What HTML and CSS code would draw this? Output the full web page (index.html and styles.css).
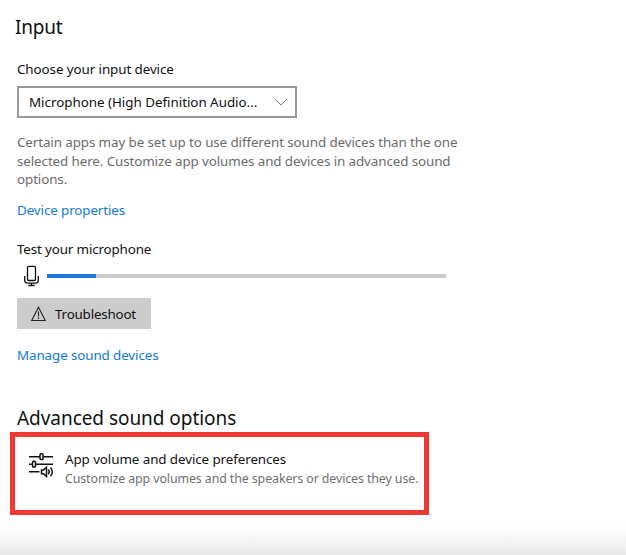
FILE: index.html
```html
<!DOCTYPE html>
<html lang="en">
<head>
<meta charset="utf-8">
<title>Sound settings</title>
<link rel="stylesheet" href="styles.css">
</head>
<body>
<main class="page">
  <h2 class="heading heading-input">Input</h2>
  <div class="label">Choose your input device</div>
  <div class="select">
    <span class="select-value">Microphone (High Definition Audio...</span>
    <svg width="14" height="8" viewBox="0 0 14 8"><path d="M1 1l6 6 6-6" fill="none" stroke="#777" stroke-width="1"/></svg>
  </div>
  <p class="hint">Certain apps may be set up to use different sound devices than the one<br>selected here. Customize app volumes and devices in advanced sound<br>options.</p>
  <a class="link">Device properties</a>
  <div class="label label-test">Test your microphone</div>
  <div class="meter">
    <svg width="16" height="22" viewBox="0 0 16 22" fill="none" stroke="#111" stroke-width="1.3"><rect x="4.5" y="1.3" width="8" height="14.2" rx="1.3"/><path d="M1.7 11v4.2q0 2.9 2.9 2.9h7.8q2.9 0 2.9-2.9V11M8.5 18v2.5M5.3 20.5h6.4"/></svg>
    <div class="track"><div class="level"></div></div>
  </div>
  <button class="button">
    <svg width="16" height="16" viewBox="0 0 16 16" fill="none" stroke="#222" stroke-width="1.1"><path d="M8.5 1.2L15.3 14.5H1.7ZM8.5 5.5v5M8.5 11.6v1.3"/></svg>
    <span>Troubleshoot</span>
  </button>
  <a class="link link-manage">Manage sound devices</a>
  <h2 class="heading heading-advanced">Advanced sound options</h2>
  <section class="card">
    <svg width="26" height="26" viewBox="0 0 26 26" fill="none" stroke="#111" stroke-width="1.5"><path d="M1 4.7h10.8M15.2 4.7H25M1 12.2h2.8M7.2 12.2H25M1 19.7h10.5"/><rect x="12" y="1.8" width="3" height="5.8" rx="1.2"/><rect x="4.5" y="9.3" width="3" height="5.8" rx="1.2"/><path d="M13.5 18h2l3-2.7v9.2l-3-2.7h-2z" stroke-width="1.5"/><path d="M20.3 17.5q1.7 2.3 0 4.7M22.5 15.5q3.6 4.4 0 8.8" stroke-width="1.5"/></svg>
    <div>
      <div class="card-title">App volume and device preferences</div>
      <div class="card-sub">Customize app volumes and the speakers or devices they use.</div>
    </div>
  </section>
</main>
</body>
</html>
```
FILE: styles.css
```css
* { box-sizing: border-box; }
body { margin: 0; background: #fff; }
.page {
  height: 555px;
  padding: 15px 17px 0;
  overflow: hidden;
  display: flex;
  flex-direction: column;
  align-items: flex-start;
  font: 13.4px/20px "Noto Sans", "Open Sans", sans-serif;
  letter-spacing: -0.09px;
  color: #111;
  white-space: nowrap;
  background: linear-gradient(#fff, #fdfdfd 20%, #f5f5f5 60%, #e8e8e8) 0 100% / 100% 33px no-repeat;
}
.heading { margin: 0; font-size: 19px; line-height: 24px; font-weight: 400; letter-spacing: -0.05px; }
.heading-input { margin-left: -2px; letter-spacing: -0.2px; }
.label { margin-top: 20px; }
.select {
  width: 280px; height: 32px; margin-top: 7px; padding: 0 7px 0 10px;
  display: flex; align-items: center; justify-content: space-between;
  border: 2px solid #999;
}
.select-value { letter-spacing: -0.03px; }
.hint { margin: 15px 0 0; line-height: 18.5px; color: #6b6b6b; letter-spacing: -0.105px; }
.link { margin-top: 11px; color: #1279d6; letter-spacing: -0.11px; }
.label-test { margin-top: 19px; letter-spacing: -0.15px; }
.meter { margin: 5px 0 0 6px; display: flex; align-items: center; gap: 8px; height: 24px; }
.track { width: 399px; height: 4px; background: #ccc; }
.level { width: 49px; height: 4px; background: #1f78d8; }
.button {
  width: 134px; height: 31px; margin-top: 10px; padding: 1px 0 0 13px;
  display: flex; align-items: center; gap: 9px;
  border: 0; background: #ccc; color: #111; font: inherit; letter-spacing: -0.2px;
}
.link-manage { margin-top: 16px; }
.heading-advanced { margin-top: 41px; }
.card {
  width: 419px; height: 83px; margin: 2px 0 0 -7px; padding: 13px 0 0 13px;
  display: flex; align-items: flex-start; gap: 11px;
  border: 5px solid #ef3934;
}
.card > svg { margin-top: 2px; }
.card-title { line-height: 19px; }
.card-sub { font-size: 12.4px; line-height: 19px; color: #707070; letter-spacing: -0.1px; }
```
